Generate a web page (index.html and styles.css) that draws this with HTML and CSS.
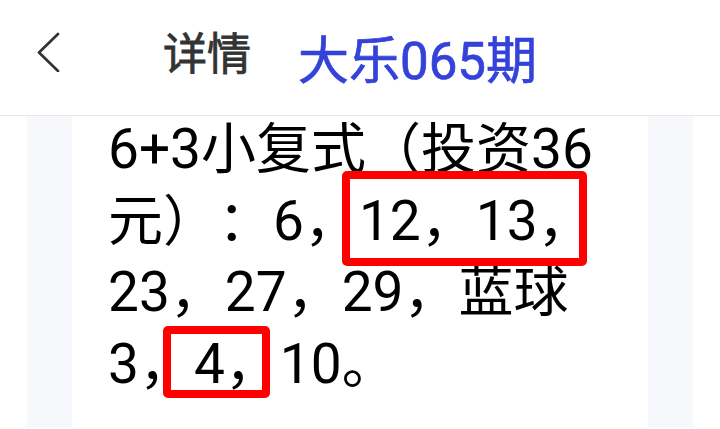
FILE: index.html
```html
<!DOCTYPE html>
<html lang="zh-CN">
<head>
<meta charset="utf-8">
<title>详情</title>
<link rel="stylesheet" href="styles.css">
</head>
<body>
<header class="topbar">
  <svg class="back" width="24" height="40" viewBox="0 0 24 40" aria-hidden="true">
    <path d="M22 2 L3 20.5 L22 39" fill="none" stroke="#333" stroke-width="2.7" stroke-linecap="round" stroke-linejoin="round"/>
  </svg>
  <span class="title">详情</span>
  <span class="issue">大乐065期</span>
</header>
<main class="page">
  <div class="rail">
    <div class="sheet">
      <p class="text">6+3小复式（投资36元）：6，12，13，23，27，29，蓝球3，4，10。</p>
    </div>
  </div>
  <div class="mark mark-red"></div>
  <div class="mark mark-blue"></div>
</main>
</body>
</html>
```

FILE: styles.css
```css
html, body {
  margin: 0;
  padding: 0;
  background: #ffffff;
}
body {
  width: 720px;
  height: 429px;
  overflow: hidden;
  font-family: Roboto, "Noto Sans CJK SC", sans-serif;
  text-spacing-trim: space-all;
}
.topbar {
  position: relative;
  z-index: 2;
  display: flex;
  align-items: flex-start;
  height: 115px;
  border-bottom: 1px solid #e6e6e6;
  background: #ffffff;
  padding-left: 36px;
  box-sizing: content-box;
}
.back {
  display: block;
  margin-top: 32px;
  flex: none;
}
.title {
  margin-left: 103px;
  margin-top: 33px;
  font-size: 44px;
  line-height: 1;
  font-weight: 400;
  color: #333333;
  -webkit-text-stroke: 0.8px #333333;
}
.issue {
  margin-left: 47px;
  margin-top: 36px;
  font-size: 51px;
  line-height: 1;
  font-weight: 400;
  color: #3442d9;
  -webkit-text-stroke: 0.7px #3442d9;
}
.page {
  position: relative;
  height: 313px;
  padding: 0 27px;
}
.rail {
  height: 100%;
  background: #f7f8fc;
  padding: 0 45px;
}
.sheet {
  height: 100%;
  background: #ffffff;
  padding: 0 30px 0 36px;
}
.text {
  margin: -2px 0 0 0;
  font-size: 55px;
  line-height: 71.7px;
  color: #000000;
  text-spacing-trim: space-all;
}
.mark {
  position: absolute;
  border: 8px solid #ff0000;
  border-radius: 5px;
  box-sizing: border-box;
}
.mark-red {
  left: 342px;
  top: 57px;
  width: 245px;
  height: 95px;
}
.mark-blue {
  left: 163px;
  top: 212px;
  width: 107px;
  height: 72px;
}
```
